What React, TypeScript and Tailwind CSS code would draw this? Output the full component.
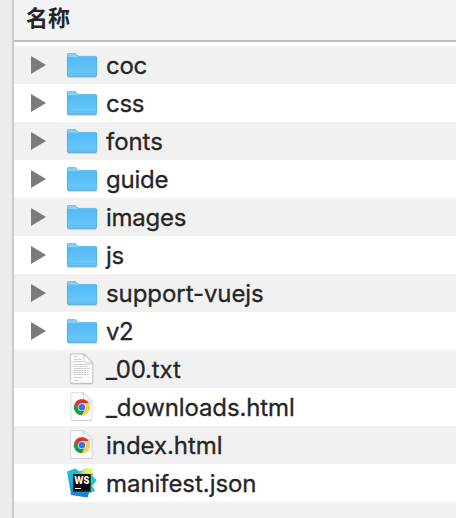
type Kind = "folder" | "text" | "chrome" | "webstorm";

const files: { name: string; kind: Kind; tracking: string }[] = [
  { name: "coc", kind: "folder", tracking: "tracking-[-0.3px]" },
  { name: "css", kind: "folder", tracking: "tracking-[-0.3px]" },
  { name: "fonts", kind: "folder", tracking: "tracking-[-0.05px]" },
  { name: "guide", kind: "folder", tracking: "tracking-[-0.2px]" },
  { name: "images", kind: "folder", tracking: "tracking-[-0.25px]" },
  { name: "js", kind: "folder", tracking: "tracking-[-0.4px]" },
  { name: "support-vuejs", kind: "folder", tracking: "tracking-[-0.07px]" },
  { name: "v2", kind: "folder", tracking: "tracking-[-0.6px]" },
  { name: "_00.txt", kind: "text", tracking: "tracking-[-0.15px]" },
  { name: "_downloads.html", kind: "chrome", tracking: "tracking-[-0.12px]" },
  { name: "index.html", kind: "chrome", tracking: "tracking-[-0.05px]" },
  { name: "manifest.json", kind: "webstorm", tracking: "tracking-[-0.05px]" },
];

function Disclosure() {
  return (
    <svg width="15" height="18" viewBox="0 0 15 18">
      <path d="M0 0L15 9L0 18Z" fill="#7b7b7b" />
    </svg>
  );
}

function Folder() {
  return (
    <svg width="32" height="32" viewBox="0 0 32 32">
      <defs>
        <linearGradient id="folderFront" x1="0" y1="0" x2="0" y2="1">
          <stop offset="0" stopColor="#54bbf5" />
          <stop offset="1" stopColor="#6cc8fb" />
        </linearGradient>
      </defs>
      <path d="M1.5 28.2H30.5" stroke="#8b9298" strokeOpacity=".4" strokeWidth="1.2" />
      <path d="M1 5.5Q1 4.2 2.5 4.2H8.5C10.8 4.2 10.8 7 13.2 7H29.5Q31 7 31 8.5V27H1Z" fill="#82d0f8" />
      <path d="M1 9H31V26.3Q31 27.5 29.8 27.5H2.2Q1 27.5 1 26.3Z" fill="url(#folderFront)" />
      <path d="M1.2 8.7H30.8" stroke="#55afe0" strokeWidth=".8" />
      <path d="M1.6 24.7H30.4" stroke="#5dbbee" strokeWidth=".7" />
      <path d="M1.4 5.5Q1.4 4.5 2.5 4.5H8.5C10.7 4.5 10.7 7.4 13.2 7.4H29.5Q30.6 7.4 30.6 8.5V26.3Q30.6 27.3 29.6 27.3H2.4Q1.4 27.3 1.4 26.3Z" fill="none" stroke="#459fd5" strokeOpacity=".55" strokeWidth=".8" />
      <path d="M2 27.3H30" stroke="#3f96ca" strokeOpacity=".7" strokeWidth=".8" />
    </svg>
  );
}

function TextFile() {
  return (
    <svg width="32" height="32" viewBox="0 0 32 32">
      <path d="M5.5 1H18L26.7 9.7V29.5Q26.7 30.5 25.7 30.5H5.5Q4.5 30.5 4.5 29.5V2Q4.5 1 5.5 1Z" fill="#fdfdfd" stroke="#000" strokeOpacity=".15" strokeWidth="1.5" />
      <path d="M5 30.7H26.3" stroke="#b4b4b4" strokeWidth=".8" />
      <path d="M15.5 1.4H18L26.4 9.8V13Z" fill="#dedede" />
      <path d="M18 1.4L26.4 9.8H20Q18 9.8 18 7.8Z" fill="#fafafa" stroke="#bdbdbd" strokeWidth=".7" />
      <g stroke="#c2c2c2" strokeWidth=".9">
        <path d="M8 3.5H11" />
        <path d="M8 6.5H16M8 8.5H17M8 11.5H24M8 13.5H22M8 15.5H24M8 17.5H23M8 19.5H22M8 21.5H24M8 24.5H17" strokeDasharray="2.5 .6 1.4 .5" />
        <path d="M8 27.5H12.5" />
      </g>
    </svg>
  );
}

function ChromeFile() {
  return (
    <svg width="32" height="32" viewBox="0 0 32 32">
      <path d="M5.8 1.6H17.5L26 10.1V28.5Q26 29.4 25 29.4H5.8Q4.8 29.4 4.8 28.5V2.5Q4.8 1.6 5.8 1.6Z" fill="#fdfdfd" stroke="#000" strokeOpacity=".11" strokeWidth="1.2" />
      <path d="M5.5 29.6H25.5" stroke="#d0d0d0" strokeWidth=".7" />
      <path d="M15 2H17.5L25.7 10.2V16Z" fill="#e5e5e5" />
      <path d="M17.5 1.9L25.8 10.2H19.5Q17.5 10.2 17.5 8.2Z" fill="#f5f5f5" stroke="#d0d0d0" strokeWidth=".6" />
      <g transform="translate(15.9 16.2)">
        <circle r="8" fill="#fbcd43" />
        <path d="M-6.93 -4A8 8 0 0 1 6.93 -4L0 -4L-3.46 2Z" fill="#d3372d" />
        <path d="M-6.93 -4A8 8 0 0 0 0 8L3.46 2L-3.46 2Z" fill="#239450" />
        <path d="M6.93 -4A8 8 0 0 1 0 8L3.46 2L0 -4Z" fill="#fbcd43" />
        <circle r="3.9" fill="#e9eefa" />
        <circle r="3.2" fill="#3972ec" />
      </g>
    </svg>
  );
}

function WebStorm() {
  return (
    <svg width="32" height="32" viewBox="0 0 32 32">
      <defs>
        <linearGradient id="wsBase" x1=".3" y1="0" x2=".4" y2="1">
          <stop offset="0" stopColor="#20c3d2" />
          <stop offset=".45" stopColor="#22afd8" />
          <stop offset="1" stopColor="#147bcf" />
        </linearGradient>
        <linearGradient id="wsTop" x1="0" y1="1" x2="1" y2="0">
          <stop offset=".15" stopColor="#24c4c4" />
          <stop offset=".5" stopColor="#dcef4e" />
          <stop offset="1" stopColor="#f0f45c" />
        </linearGradient>
      </defs>
      <path d="M1 4.5L9 1.5L14 4.5L20 1.5L26 2.5L26.5 9L30.5 13.5L26 19L29 24L23 26L21.5 30.5L5 28L3 16Z" fill="url(#wsBase)" />
      <path d="M11 8L20 1.5H26.5V6L24 9H11Z" fill="url(#wsTop)" />
      <path d="M24 9L26.5 6V9.5L30.5 13.5L26 19L29 24L23 26V24Z" fill="#2cc2ca" />
      <rect x="7" y="7" width="17.6" height="17.6" fill="#0c0c0c" />
      <text x="8.3" y="17" fontSize="10.5" fontWeight="800" fill="#fff" textLength="15" lengthAdjust="spacingAndGlyphs" className="font-['Inter',sans-serif]">WS</text>
      <path d="M9 21.5H15" stroke="#fff" strokeWidth="1" />
    </svg>
  );
}

const icons: Record<Kind, () => React.JSX.Element> = {
  folder: Folder,
  text: TextFile,
  chrome: ChromeFile,
  webstorm: WebStorm,
};

export default function App() {
  return (
    <div className="flex h-[518px] w-[456px] overflow-hidden bg-white font-['Inter',sans-serif] text-[#262626]">
      <aside className="w-3.5 shrink-0 border-r-2 border-[#cacaca] bg-[#ebebeb]" />
      <main className="flex min-w-0 flex-1 flex-col">
        <header className="flex h-[42px] shrink-0 items-start border-b-2 border-[#bdbdbd] bg-[#f3f3f3] pl-3 pt-0.5">
          <h1 className="font-['Noto_Sans_CJK_SC',sans-serif] text-[22px] leading-7 font-bold">名称</h1>
        </header>
        <ul className="mt-1 shrink-0">
          {files.map(({ name, kind, tracking }) => {
            const Icon = icons[kind];
            return (
              <li key={name} className="flex h-[38px] items-center pl-[17px] odd:bg-[#f1f1f1]">
                <span className="w-[35px] shrink-0">{kind === "folder" && <Disclosure />}</span>
                <span className="w-10 shrink-0">
                  <Icon />
                </span>
                <span className={`pt-0.5 text-[24px] leading-9 font-normal whitespace-nowrap [-webkit-text-stroke:0.3px_#262626] ${tracking}`}>{name}</span>
              </li>
            );
          })}
        </ul>
        <div className="flex-1 bg-[#f1f1f1]" />
      </main>
    </div>
  );
}
